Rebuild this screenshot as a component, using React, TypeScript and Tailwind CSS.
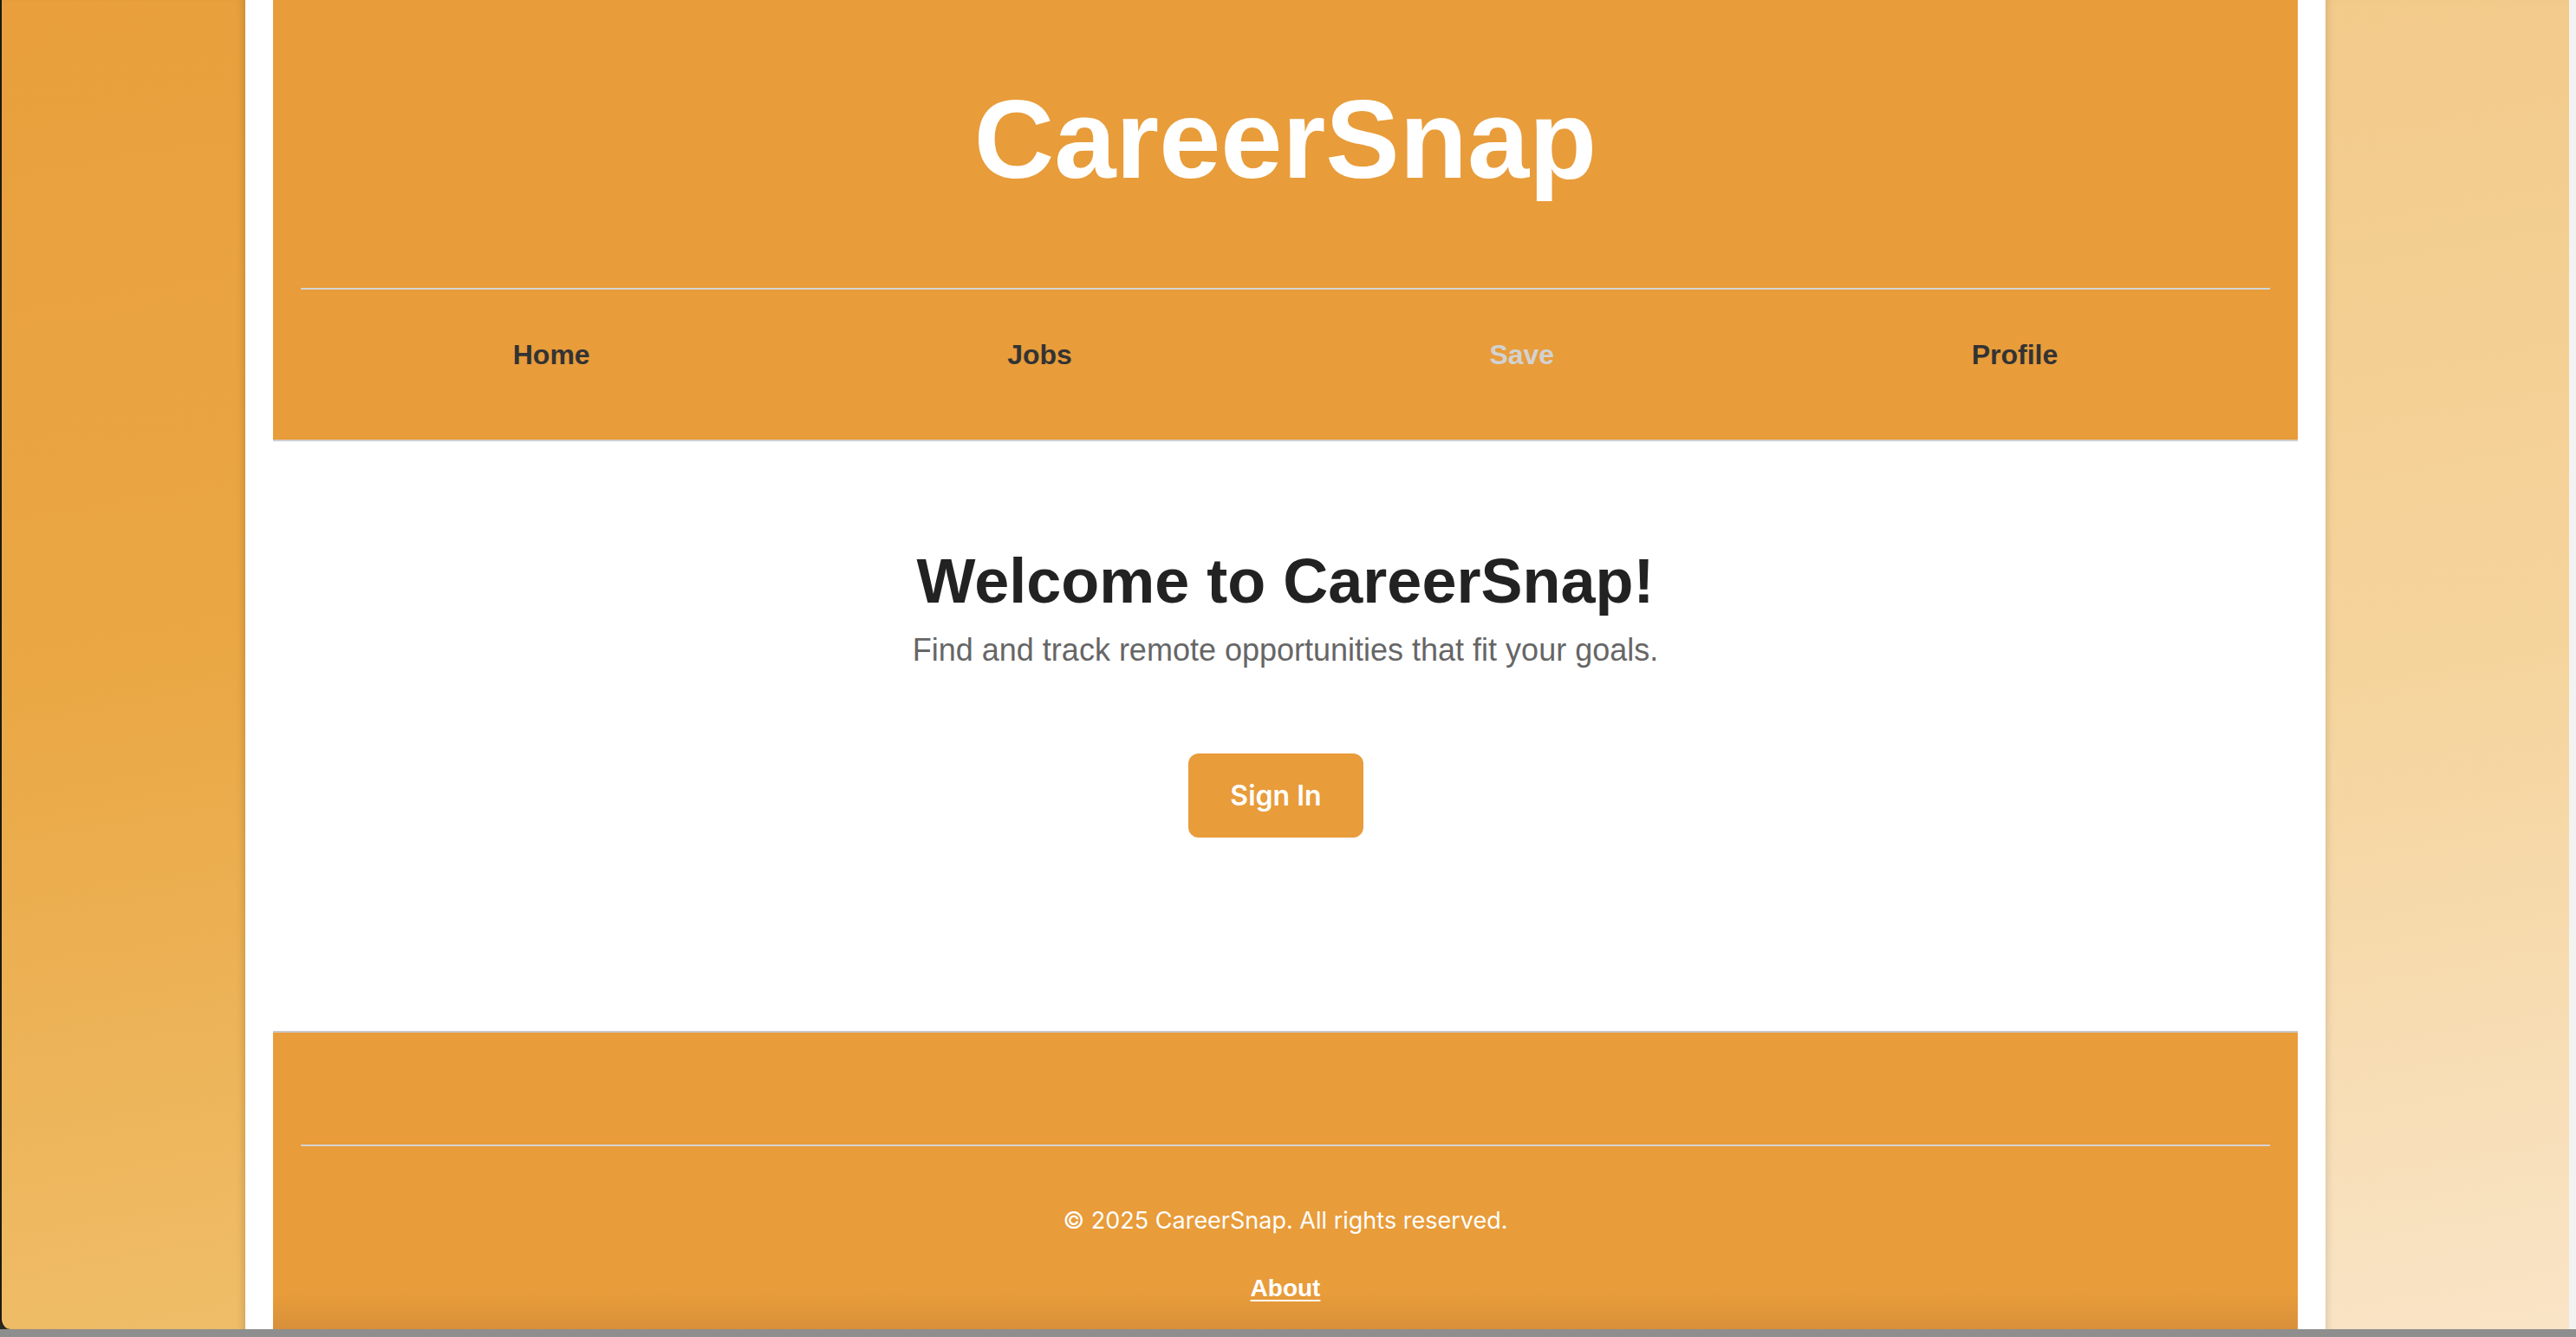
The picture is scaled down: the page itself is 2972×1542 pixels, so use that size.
import React from 'react';

const navLinks = [
  { label: 'Home', active: false },
  { label: 'Jobs', active: false },
  { label: 'Save', active: true },
  { label: 'Profile', active: false },
];

const App: React.FC = () => {
  return (
    <div className="w-[2972px] h-[1542px] flex flex-col overflow-hidden bg-[#2a2a22]">
      <div className="flex h-[1533px]">
        {/* left side window */}
        <div className="w-[283px] border-l-2 border-[#1d1a12] rounded-bl-[12px] bg-[linear-gradient(170deg,#e89f3c_0%,#eaa744_50%,#efbd68_100%)] shadow-[inset_-8px_0_8px_-6px_rgba(0,0,0,0.15)]" />

        {/* page */}
        <div className="w-[2400px] bg-white px-[32px] flex flex-col font-['Liberation_Sans',Arial,sans-serif]">
          <header className="h-[509px] bg-[#e89c3a] border-b-2 border-[#cfcfcf] px-[32px] flex flex-col">
            <h1 className="pt-[87px] pb-[98px] text-center text-[128px] leading-[147px] font-bold text-white">
              CareerSnap
            </h1>
            <div className="h-[2px] bg-[#d4d4d4]" />
            <nav className="pt-[57px] px-[4px] flex justify-around">
              {navLinks.map((link) => (
                <a
                  key={link.label}
                  href="#"
                  className={
                    link.active
                      ? 'text-[32px] leading-[36px] font-bold text-[#d2d2d2]'
                      : 'text-[32px] leading-[36px] font-bold text-[#333333]'
                  }
                >
                  {link.label}
                </a>
              ))}
            </nav>
          </header>

          <main className="h-[680px] flex flex-col items-center">
            <h2 className="pt-[120px] text-[72px] leading-[83px] font-bold text-[#222222]">
              Welcome to CareerSnap!
            </h2>
            <p className="mt-[17px] text-[36px] leading-[41px] text-[#666666]">
              Find and track remote opportunities that fit your goals.
            </p>
            <button className="mt-[99px] mr-[22px] w-[202px] h-[97px] rounded-[12px] bg-[#e89c3a] flex items-center justify-center text-white text-[32px] font-semibold font-['Inter',sans-serif]">
              Sign In
            </button>
          </main>

          <footer className="flex-1 border-t-2 border-[#c8c8c8] bg-[linear-gradient(to_bottom,#e89c3a_88%,#d8903a_100%)] flex flex-col">
            <div className="mt-[129px] mx-[32px] h-[2px] bg-[#d4d4d4]" />
            <p className="mt-[69px] text-center text-white text-[27px] leading-[34px] font-['Inter',sans-serif]">
              © 2025 CareerSnap. All rights reserved.
            </p>
            <div className="mt-[44px] text-center">
              <a href="#" className="text-white text-[28px] leading-[34px] font-bold underline underline-offset-4">
                About
              </a>
            </div>
          </footer>
        </div>

        {/* right side window */}
        <div className="w-[281px] bg-[linear-gradient(170deg,#f2ca8a_0%,#f5d49c_50%,#f9e4c6_100%)] shadow-[inset_8px_0_8px_-6px_rgba(0,0,0,0.12)]" />
        <div className="w-[8px] bg-[#f2f2f2]" />
      </div>
      <div className="h-[9px] bg-[#8e8e8e]" />
    </div>
  );
};

export default App;
